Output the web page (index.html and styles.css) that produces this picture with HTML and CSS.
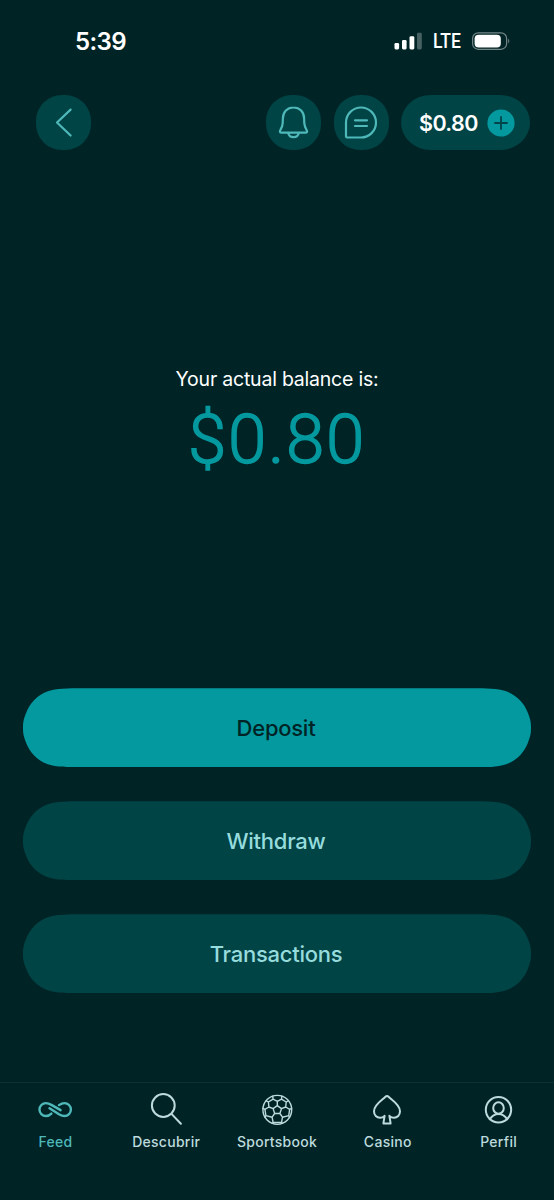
FILE: index.html
```html
<!DOCTYPE html>
<html lang="en">
<head>
<meta charset="utf-8">
<title>Balance</title>
<link rel="stylesheet" href="styles.css">
</head>
<body>
<div class="screen">
  <div class="status">
    <span class="time">5:39</span>
    <div class="indicators">
      <svg class="signal" width="28" height="18" viewBox="0 0 28 18" fill="#fff"><rect x=".5" y="11" width="4.6" height="6.4" rx="1.3"/><rect x="8" y="8" width="4.6" height="9.4" rx="1.3"/><rect x="15.5" y="4.3" width="4.8" height="13.1" rx="1.3"/><rect x="23" y=".8" width="4.8" height="16.6" rx="1.3" opacity=".28"/></svg>
      <span class="network">LTE</span>
      <svg width="39" height="18" viewBox="0 0 39 18"><rect x=".6" y=".9" width="34" height="16.4" rx="5.6" fill="none" stroke="#748586" stroke-width="1.2"/><rect x="2.6" y="2.7" width="26.2" height="12.8" rx="4" fill="#fff"/><path d="M36.2 6.5q2.2 2.5 0 5z" fill="#748586"/></svg>
    </div>
  </div>
  <header class="topbar">
    <button class="round" aria-label="Back"><svg width="55" height="55" viewBox="0 0 55 55"><path d="M34.6 14.6 21 27.5l13.6 13"/></svg></button>
    <div class="actions">
      <button class="round" aria-label="Notifications"><svg width="55" height="55" viewBox="0 0 55 55"><path d="M27.5 12.5c-6.5 0-10.4 4.5-10.6 10.7l-.2 5.1c-.1 2.6-1.1 4.5-2.3 6.7-1 1.8-.5 2.6 1.2 2.6h23.8c1.7 0 2.2-.8 1.2-2.6-1.2-2.2-2.2-4.1-2.3-6.7l-.2-5.1c-.2-6.2-4.1-10.7-10.6-10.7zM22.3 38c.8 5.5 9.6 5.5 10.4 0"/></svg></button>
      <button class="round" aria-label="Messages"><svg width="55" height="55" viewBox="0 0 55 55"><path d="M12 27.5a15 15 0 1 1 15 15H13.2q-1.2 0-1.2-1.2zM21 25.3h12M21 31h12"/></svg></button>
      <button class="wallet"><span>$0.80</span><svg width="28" height="28" viewBox="0 0 28 28"><circle cx="14" cy="14" r="13.6" fill="#03999f"/><path d="M8 14h12M14 8v12" stroke="#00444a" stroke-width="1.8" stroke-linecap="round"/></svg></button>
    </div>
  </header>
  <main class="balance">
    <p class="caption">Your actual balance is:</p>
    <p class="amount">$0.80</p>
  </main>
  <div class="buttons">
    <button class="pill primary">Deposit</button>
    <button class="pill">Withdraw</button>
    <button class="pill">Transactions</button>
  </div>
  <nav class="tabs">
    <a class="tab active"><svg width="36" height="34" viewBox="-1.2 -8.4 38 35.9"><path d="M14 13.3C12.3 15 10.4 15.9 8.2 15.9A6.8 6.8 0 0 1 8.2 2.3C10.3 2.3 12 3 14 4.1L23.7 9.7M22 4.4c2-1.4 4-2.1 5.8-2.1a6.8 6.8 0 0 1 0 13.6c-2.1 0-3.8-.7-5.8-1.8L12 7.7"/></svg><span>Feed</span></a>
    <a class="tab"><svg width="36" height="34" viewBox="0 0 36 34"><circle cx="15.3" cy="12.5" r="11.4"/><path d="m23.5 20.9 9.4 9.8"/></svg><span>Descubrir</span></a>
    <a class="tab ball"><svg width="36" height="34" viewBox="-18.3 -16.8 36 34"><circle r="14.4"/><path d="M0-4.2 4.2-1.2 2.6 3.7H-2.6L-4.2-1.2ZM0-4.2V-8.5M4.2-1.2 8.4-2.8M2.6 3.7 5.2 7.4M-2.6 3.7-5.2 7.4M-4.2-1.2-8.4-2.8M0-8.5 4.2-10.7 8.9-7.8 8.4-2.8 12.4-.5 11.4 5.8 5.2 7.4 4.2 12.6H-4.2L-5.2 7.4-11.4 5.8-12.4-.5-8.4-2.8-8.9-7.8-4.2-10.7ZM4.2-10.7 4.6-13.5M-4.2-10.7-4.6-13.5M8.9-7.8 11-9M-8.9-7.8-11-9M12.4-.5l1.9-1M-12.4-.5l-1.9-1M11.4 5.8l.8 2M-11.4 5.8l-.8 2M4.2 12.6l1 .9M-4.2 12.6l-1 .9"/></svg><span>Sportsbook</span></a>
    <a class="tab"><svg width="36" height="34" viewBox="1 0 36 34"><path d="M18 3c-.7 0-1.2.4-1.8 1C13.4 7 5 11.6 5 18.2c0 4 2.8 6.6 6 6.6 1.7 0 3.4-.6 4.6-2l-1.2 7.6h7.2l-1.2-7.6c1.2 1.4 2.9 2 4.6 2 3.2 0 6-2.6 6-6.6C31 11.6 22.6 7 19.8 4c-.6-.6-1.1-1-1.8-1z"/></svg><span>Casino</span></a>
    <a class="tab"><svg width="36" height="34" viewBox=".5 0 36 34"><circle cx="18" cy="16.8" r="12.7"/><ellipse cx="18" cy="15" rx="5.3" ry="5.7"/><path d="M9.3 26.2c2.3-3.6 5.2-5.2 8.7-5.2s6.4 1.6 8.7 5.2"/></svg><span>Perfil</span></a>
  </nav>
</div>
</body>
</html>
```

FILE: styles.css
```css
* { box-sizing: border-box; }
body { margin: 0; background: #002426; font-family: Inter, "Liberation Sans", sans-serif; color: #fff; }
p { margin: 0; }
button { border: 0; padding: 0; font: inherit; color: inherit; }
svg { display: block; flex: none; }
.screen { width: 554px; height: 1200px; display: flex; flex-direction: column; overflow: hidden; }
.status { height: 95px; padding: 26px 43px 0 75px; display: flex; justify-content: space-between; align-items: flex-start; }
.time { font-size: 24px; line-height: 31px; font-weight: 600; letter-spacing: -.6px; }
.indicators { display: flex; align-items: center; height: 30px; }
.network { width: 28px; margin: 2px 11px 0 11px; font: 500 19.5px/28px Roboto, sans-serif; white-space: nowrap; transform: scaleX(.9); transform-origin: left; }
.topbar { height: 55px; padding: 0 24px 0 36px; display: flex; justify-content: space-between; }
.actions { display: flex; gap: 12.5px; }
.round { width: 55px; height: 55px; border-radius: 26px; background: #004446; }
.round path { fill: none; stroke: #4fb8b9; stroke-width: 2.2; stroke-linecap: round; stroke-linejoin: round; }
.wallet { width: 129px; height: 55px; border-radius: 30px / 27.5px; background: #004446; display: flex; align-items: center; justify-content: space-between; padding: 0 15px 0 18px; font-size: 21.5px; font-weight: 600; letter-spacing: -.6px; }
.balance { height: 538.3px; padding-top: 215px; text-align: center; }
.caption { font-size: 19.5px; line-height: 28px; letter-spacing: -.22px; }
.amount { margin-top: 6px; font: 300 69px/82px Roboto, sans-serif; letter-spacing: 1.7px; -webkit-text-stroke: 1.4px #03999f; color: #03999f; }
.buttons { padding: 0 23px; display: flex; flex-direction: column; gap: 34px; }
.pill { height: 79px; background: #004446; color: #97dcdd; font-size: 22px; font-weight: 550; letter-spacing: -.25px; padding: 1px 2px 0 0; clip-path: path("M60.4 0C43 0 34.3 0 24.9 3C14.7 6.7 6.7 14.7 3 24.9C0 32 0 36 0 39.5C0 43 0 47 3 54.1C6.7 64.3 14.7 72.3 24.9 76C34.3 79 43 79 60.4 79H447.6C465 79 473.7 79 483.1 76C493.3 72.3 501.3 64.3 505 54.1C508 47 508 43 508 39.5C508 36 508 32 505 24.9C501.3 14.7 493.3 6.7 483.1 3C473.7 0 465 0 447.6 0Z"); }
.primary { background: #03999f; color: #002426; }
.tabs { margin-top: auto; height: 118px; border-top: 1px solid #0d3133; display: grid; grid-template-columns: repeat(5, 1fr); padding-top: 10px; }
.tab { display: flex; flex-direction: column; align-items: center; gap: 4.5px; color: #bddadc; font-size: 14px; line-height: 20px; font-weight: 500; letter-spacing: .28px; }
.tab svg { fill: none; stroke: currentColor; stroke-width: 2; stroke-linecap: round; stroke-linejoin: round; }
.tab.ball svg { stroke-width: 1.4; }
.active { color: #4fb8b9; }
.tab.active svg { stroke-width: 2.5; }
```
